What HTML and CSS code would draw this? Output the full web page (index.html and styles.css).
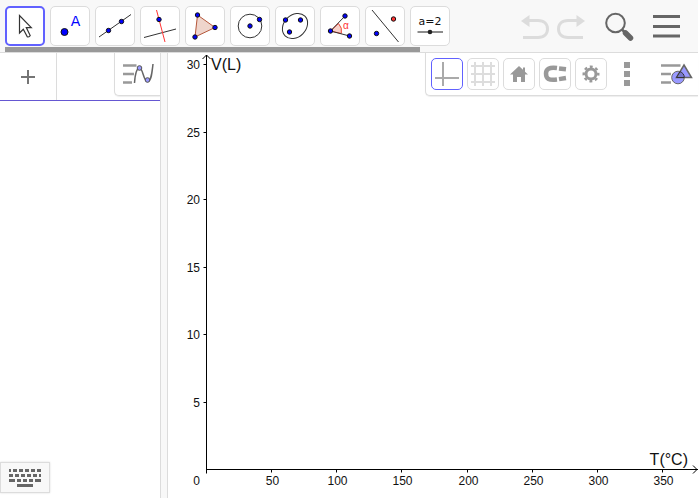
FILE: index.html
```html
<!DOCTYPE html>
<html lang="en">
<head>
    <meta charset="UTF-8">
    <meta name="viewport" content="width=device-width, initial-scale=1.0">
    <title>V-T Graph</title>
    <link rel="stylesheet" href="styles.css">
</head>
<body>
    <div class="app">
        <header class="toolbar">
            <div class="tools-area">
                <div class="tools">
                    <button type="button" class="tool selected" aria-label="Move">
                        <svg viewBox="0 0 38 38"><path d="M13.500 8.500V26L17.300 22.300L21.300 29.800Q22.500 30.500 24.200 28.600L20.300 20.600H25.300Z" fill="#fff" stroke="#333" stroke-width="1.200"/></svg>
                    </button>
                    <button type="button" class="tool" aria-label="Point">
                        <svg viewBox="0 0 38 38"><circle class="pt" cx="13.500" cy="25" r="3.500"/><text x="24.500" y="18.500" class="point-text">A</text></svg>
                    </button>
                    <button type="button" class="tool" aria-label="Line">
                        <svg viewBox="0 0 38 38"><path class="ln" d="M3 30L35 7.500"/><circle class="pt" cx="12.500" cy="23.500" r="2.200"/><circle class="pt" cx="25.500" cy="14.500" r="2.200"/></svg>
                    </button>
                    <button type="button" class="tool" aria-label="Perpendicular line">
                        <svg viewBox="0 0 38 38"><path class="ln" d="M3 30.500L35 22"/><path class="ln red" d="M15.500 3L24 35"/><circle class="pt" cx="18" cy="12.500" r="2.200"/></svg>
                    </button>
                    <button type="button" class="tool" aria-label="Polygon">
                        <svg viewBox="0 0 38 38"><path d="M11.500 8L29 20.500L9 30Z" fill="#efd5cc" stroke="#b5573a"/><circle class="pt" cx="11.500" cy="8" r="2.200"/><circle class="pt" cx="29" cy="20.500" r="2.200"/><circle class="pt" cx="9" cy="30" r="2.200"/></svg>
                    </button>
                    <button type="button" class="tool" aria-label="Circle">
                        <svg viewBox="0 0 38 38"><circle class="ln" cx="19" cy="19" r="11.800"/><circle class="pt" cx="19" cy="19" r="2.200"/><circle class="pt" cx="28.500" cy="12.500" r="2.200"/></svg>
                    </button>
                    <button type="button" class="tool" aria-label="Conic">
                        <svg viewBox="0 0 38 38"><ellipse class="ln" cx="19" cy="19" rx="14" ry="11" transform="rotate(-45 19 19)"/><circle class="pt" cx="9.500" cy="13" r="2.200"/><circle class="pt" cx="24.500" cy="13" r="2.200"/><circle class="pt" cx="13.500" cy="25" r="2.200"/></svg>
                    </button>
                    <button type="button" class="tool" aria-label="Angle">
                        <svg viewBox="0 0 38 38"><path d="M9.500 24L17.500 16.500A11 11 0 0 1 20.300 26.500Z" fill="#f9d2cb" stroke="#e43"/><path class="ln" d="M24 9L9.500 24L28.500 29"/><circle class="pt" cx="24" cy="9" r="2.200"/><circle class="pt" cx="9.500" cy="24" r="2.200"/><circle class="pt" cx="28.500" cy="29" r="2.200"/><text x="22" y="22" class="alpha">α</text></svg>
                    </button>
                    <button type="button" class="tool" aria-label="Reflect">
                        <svg viewBox="0 0 38 38"><path class="ln" d="M6 3L32.500 35"/><circle class="pt" cx="10.500" cy="26.500" r="2.200"/><circle class="pt image" cx="27.500" cy="12" r="2.200"/></svg>
                    </button>
                    <button type="button" class="tool" aria-label="Slider">
                        <svg viewBox="0 0 38 38"><text x="19" y="18" class="slider-text">a=2</text><path d="M6.500 25H32" stroke="#666" stroke-width="1.500"/><circle cx="19" cy="25" r="2.300" fill="#222"/></svg>
                    </button>
                </div>
                <div class="scroll-thumb"></div>
            </div>
            <div class="actions">
                <button type="button" class="action" aria-label="Undo" disabled>
                    <svg width="28" height="26" viewBox="0 0 28 26"><path d="M0 8L8.500 2V14Z" fill="#dcdcdc"/><path d="M8 7.500H17C23 7.500 26.500 11 26.500 16C26.500 21 23 24.500 17 24.500H2" fill="none" stroke="#dcdcdc" stroke-width="3"/></svg>
                </button>
                <button type="button" class="action" aria-label="Redo" disabled>
                    <svg width="28" height="26" viewBox="0 0 28 26"><path d="M28 8L19.500 2V14Z" fill="#dcdcdc"/><path d="M20 7.500H11C5 7.500 1.500 11 1.500 16C1.500 21 5 24.500 11 24.500H26" fill="none" stroke="#dcdcdc" stroke-width="3"/></svg>
                </button>
                <button type="button" class="action wide first" aria-label="Search">
                    <svg width="30" height="30" viewBox="0 0 30 30"><circle cx="10.500" cy="12" r="9.300" fill="none" stroke="#666" stroke-width="2"/><path d="M17 18.500L20.500 22" stroke="#666" stroke-width="2.500"/><path d="M20.500 22L25.500 27" stroke="#666" stroke-width="5.500" stroke-linecap="round"/></svg>
                </button>
                <button type="button" class="action wide" aria-label="Menu">
                    <svg width="27" height="24" viewBox="0 0 27 24"><path d="M0 2.500H27M0 12.500H27M0 22H27" stroke="#666" stroke-width="3"/></svg>
                </button>
            </div>
        </header>

        <main class="views">
            <section class="algebra">
                <div class="input-row">
                    <button type="button" class="add" aria-label="Add">
                        <svg width="14" height="14" viewBox="0 0 14 14"><path d="M7 0V14M0 7H14" stroke="#757575" stroke-width="2"/></svg>
                    </button>
                    <input type="text" class="expression" aria-label="Expression">
                </div>
                <div class="stylebar algebra-bar">
                    <button type="button" class="style-toggle" aria-label="Algebra style bar">
                        <svg width="32" height="24" viewBox="0 0 32 24"><path d="M0 3.500H13.500M0 12H11M0 20.500H9" stroke="#999" stroke-width="2.500"/><path d="M11.500 21C12 14 13.500 6 16.500 6C20 6 20.500 19.500 24.500 19.500C28.500 19.500 29 10 30 2" fill="none" stroke="#666" stroke-width="1.500"/><circle cx="16.500" cy="6" r="2.300" fill="#99f" stroke="#555"/><circle cx="24.500" cy="18" r="2.300" fill="#99f" stroke="#555"/></svg>
                    </button>
                </div>
                <button type="button" class="keyboard" aria-label="Keyboard">
                    <svg width="32" height="19" viewBox="0 0 32 19"><g fill="none" stroke="#666" stroke-width="3"><path d="M0 2.500H32" stroke-dasharray="2 2 4 2 4 2 4 2 4 2 4 2"/><path d="M0 7.500H32" stroke-dasharray="4 2"/><path d="M0 12.500H6M8 12.500H12M14 12.500H18M20 12.500H24M26 12.500H32M8 17.500H24"/></g></svg>
                </button>
            </section>

            <div class="splitter"></div>

            <section class="graphics">
                <svg class="plot" id="plot" role="img" aria-label="Volume against temperature axes"></svg>
                <div class="stylebar graphics-bar">
                    <button type="button" class="style-btn active" aria-label="Axes">
                        <svg viewBox="0 0 30 30"><path d="M11 3V27M3 19H27" stroke="#aaa" stroke-width="2"/></svg>
                    </button>
                    <button type="button" class="style-btn" aria-label="Grid">
                        <svg viewBox="0 0 30 30"><path d="M7 3V27M15 3V27M23 3V27M3 7H27M3 15H27M3 23H27" stroke="#ddd" stroke-width="2"/></svg>
                    </button>
                    <button type="button" class="style-btn" aria-label="Home">
                        <svg viewBox="0 0 30 30"><path d="M15 7L6 15.500H9V23H13V18H17V23H21V15.500H24L21 12.700V8.500H19V10.800Z" fill="#999"/></svg>
                    </button>
                    <button type="button" class="style-btn" aria-label="Snapping">
                        <svg viewBox="0 0 30 30"><path d="M17 9C9 8 6 10 6 14.500C6 20 9 21.500 17 20.500M19 9.400L26 10.200M19 20.100L26 19" fill="none" stroke="#999" stroke-width="4.500"/></svg>
                    </button>
                    <button type="button" class="style-btn" aria-label="Settings">
                        <svg viewBox="0 0 30 30"><circle cx="15" cy="15" r="5" fill="none" stroke="#999" stroke-width="3"/><circle cx="15" cy="15" r="7.300" fill="none" stroke="#999" stroke-width="2.400" stroke-dasharray="2.900 2.830" stroke-dashoffset="1.400"/></svg>
                    </button>
                    <button type="button" class="more" aria-label="More">
                        <svg width="6" height="24" viewBox="0 0 6 24"><path d="M0 0H6V6H0ZM0 9H6V15H0ZM0 18H6V24H0Z" fill="#999"/></svg>
                    </button>
                    <button type="button" class="style-toggle" aria-label="Graphics style bar">
                        <svg width="32" height="24" viewBox="0 0 32 24"><path d="M0 3.500H19.500M0 12H10M0 20.500H10" stroke="#999" stroke-width="2.500"/><circle cx="17" cy="15.500" r="6.300" fill="#99f" stroke="#666"/><path d="M23 3L30.500 15.500H15.500Z" fill="#99f" stroke="#666" stroke-width="1.500"/><path d="M15.500 15.500L19 9.700A6.300 6.300 0 0 1 23.300 15.500Z" fill="#77c" stroke="#333"/></svg>
                    </button>
                </div>
            </section>
        </main>
    </div>

    <script src="script.js"></script>
</body>
</html>
```

FILE: styles.css
```css
:root {
    --accent: #6557d2;
    --blue: #6161ff;
    --border: #dcdcdc;
    --bar: #f8f8f8;
    --gray: #999;
}

* {
    margin: 0;
    padding: 0;
    box-sizing: border-box;
    font-family: "Liberation Sans", Arial, sans-serif;
}

body {
    background-color: #fff;
    overflow: hidden;
}

button {
    display: flex;
    align-items: center;
    justify-content: center;
    flex-shrink: 0;
    border: none;
    background: none;
    cursor: pointer;
}

button svg {
    display: block;
}

.app {
    display: flex;
    flex-direction: column;
    height: 100vh;
    padding: 0 2px 2px 0;
}

/* Toolbar */
.toolbar {
    display: flex;
    justify-content: space-between;
    background-color: var(--bar);
    border-bottom: 1px solid var(--border);
}

.tools-area {
    flex: 1;
    min-width: 0;
    padding: 6px 0 0 5px;
}

.tools {
    display: flex;
    gap: 5px;
    margin-bottom: 1px;
}

.tool {
    width: 40px;
    height: 40px;
    border: 1px solid var(--border);
    border-radius: 5px;
    background-color: #fff;
}

.tool.selected {
    border: 2px solid var(--blue);
}

.tool svg {
    width: 38px;
    height: 38px;
    flex-shrink: 0;
}

.scroll-thumb {
    width: 81%;
    height: 5px;
    background-color: var(--gray);
}

.pt {
    fill: #00f;
    stroke: #111;
}

.pt.image {
    fill: #f33;
}

.ln {
    fill: none;
    stroke: #333;
}

.ln.red {
    stroke: #f33;
}

.alpha {
    fill: #f33;
    font-size: 10px;
}

.point-text,
.slider-text {
    font-family: "DejaVu Sans", sans-serif;
    text-anchor: middle;
}

.point-text {
    font-size: 14px;
    fill: #00f;
}

.slider-text {
    font-size: 11px;
    fill: #111;
}

.actions {
    display: flex;
    align-items: center;
    padding-right: 8px;
}

.action {
    width: 36px;
    height: 40px;
}

.action.wide {
    width: 47px;
}

.action.first {
    margin-left: 7px;
}

/* Views */
.views {
    display: flex;
    flex: 1;
    min-height: 0;
}

.algebra {
    position: relative;
    flex: 0 0 160px;
    overflow: hidden;
}

.input-row {
    display: flex;
    height: 48px;
    border-bottom: 1px solid var(--accent);
}

.add {
    width: 57px;
    border-right: 1px solid var(--border);
}

.expression {
    flex: 1;
    min-width: 0;
    padding: 0 8px;
    border: none;
    outline: none;
    font-size: 16px;
}

.stylebar {
    position: absolute;
    top: 0;
    right: 0;
    display: flex;
    height: 43px;
    padding: 5px 0 0 5px;
    background-color: #fff;
    border: solid var(--border);
    border-width: 0 0 1px 1px;
    border-radius: 0 0 0 5px;
    box-shadow: 0 1px 1px #eee;
}

.algebra-bar {
    padding-left: 1px;
}

.graphics-bar {
    gap: 4px;
}

.style-btn,
.more {
    width: 32px;
    height: 32px;
}

.style-btn {
    border: 1px solid var(--border);
    border-radius: 5px;
}

.style-btn.active {
    border-color: var(--blue);
}

.style-btn svg {
    width: 30px;
    height: 30px;
    flex-shrink: 0;
}

.style-toggle {
    width: 44px;
    height: 32px;
}

.algebra-bar .style-toggle {
    padding-left: 2px;
}

.graphics-bar .style-toggle {
    width: 51px;
    padding-left: 8px;
}

.keyboard {
    position: absolute;
    bottom: 5px;
    left: 0;
    width: 50px;
    height: 31px;
    background-color: var(--bar);
    border: 1px solid var(--border);
    box-shadow: 0 0 2px #ddd;
}

.splitter {
    width: 8px;
    background-color: var(--bar);
    border: solid var(--border);
    border-width: 0 1px;
    cursor: col-resize;
}

.graphics {
    position: relative;
    flex: 1;
    min-width: 0;
}

.plot {
    display: block;
    width: 100%;
    height: 100%;
}

.axis {
    fill: none;
    stroke: #000;
}

.tick-label {
    font-size: 12px;
    fill: #111;
}

.axis-label {
    font-size: 16px;
    fill: #111;
}

.end {
    text-anchor: end;
}

.middle {
    text-anchor: middle;
}
```

FILE: script.js
```js
const SVG_NS = 'http://www.w3.org/2000/svg';
const plot = document.getElementById('plot');

// Pixels per unit on each axis
const scaleX = 1.303;
const scaleY = 13.5;

function add(name, attrs, text) {
    const el = document.createElementNS(SVG_NS, name);
    for (const key in attrs) {
        el.setAttribute(key, attrs[key]);
    }
    if (text !== undefined) {
        el.textContent = text;
    }
    plot.appendChild(el);
}

function draw() {
    const width = plot.clientWidth;
    const height = plot.clientHeight;
    const originX = 38.5;
    const originY = height - 28.5;
    plot.replaceChildren();

    // Axes with arrow heads
    add('path', { class: 'axis', d: `M${originX} ${originY + 4}V2M${originX - 4} 6L${originX} 2L${originX + 4} 6` });
    add('path', { class: 'axis', d: `M${originX} ${originY}H${width}M${width - 5} ${originY - 4}L${width - 1} ${originY}L${width - 5} ${originY + 4}` });

    for (let v = 5; originY - v * scaleY > 8; v += 5) {
        const y = Math.floor(originY - v * scaleY) + 0.5;
        add('path', { class: 'axis', d: `M${originX - 3} ${y}H${originX}` });
        add('text', { class: 'tick-label end', x: 32, y: y + 4.5 }, v);
    }

    for (let t = 50; originX + t * scaleX < width - 20; t += 50) {
        const x = Math.floor(originX + t * scaleX) + 0.5;
        add('path', { class: 'axis', d: `M${x} ${originY}V${originY + 3}` });
        add('text', { class: 'tick-label middle', x: x + 1, y: originY + 15.5 }, t);
    }

    add('text', { class: 'tick-label end', x: 32, y: originY + 15.5 }, 0);
    add('text', { class: 'axis-label', x: 43, y: 17 }, 'V(L)');
    add('text', { class: 'axis-label end', x: width - 10, y: originY - 4.5 }, 'T(°C)');
}

draw();
window.addEventListener('resize', draw);
```
